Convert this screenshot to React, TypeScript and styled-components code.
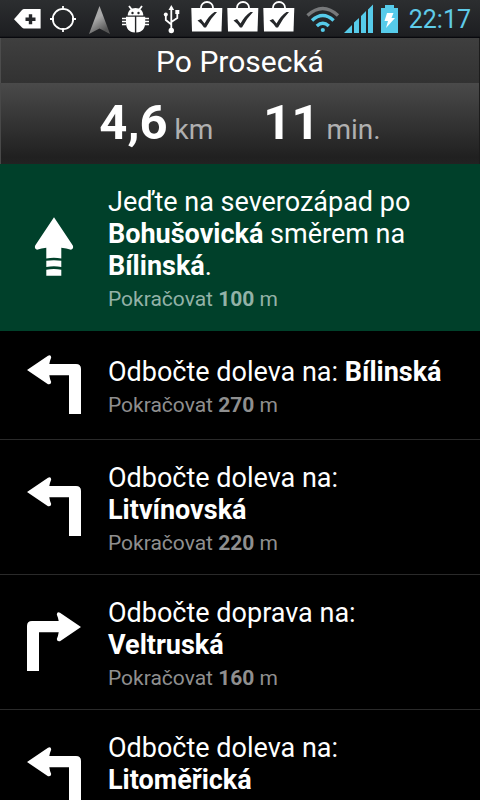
import React from "react";
import styled, { createGlobalStyle } from "styled-components";

const Global = createGlobalStyle`
  body {
    margin: 0;
    background: #000;
    color: #fff;
    font-family: Roboto, "Noto Sans", sans-serif;
    overflow: hidden;
  }
  * { box-sizing: border-box; }
`;

const Screen = styled.div`
  display: flex;
  flex-direction: column;
  height: 100vh;
  overflow: hidden;
`;

const StatusBar = styled.header`
  display: flex;
  flex: none;
  align-items: center;
  justify-content: space-between;
  height: 38px;
  padding: 0 9px 0 12px;
  background: linear-gradient(#2c2e30, #1d1e21 95%, #08080d 98%);
`;

const Notices = styled.div`
  display: flex;
  flex: none;
  svg { display: block; }
`;

const System = styled.div`
  display: flex;
  flex: none;
  align-items: center;
  svg { display: block; flex: none; }
`;

const Clock = styled.time`
  margin-left: 10px;
  padding-top: 2px;
  color: #5fcbe8;
  font-size: 25px;
  line-height: 36px;
`;

const Title = styled.h1`
  flex: none;
  margin: 0;
  padding-top: 2px;
  border-left: 1px solid #4c4c4c;
  border-right: 1px solid #1c1c1c;
  background: linear-gradient(#3f3f3f, #323232);
  font-size: 30px;
  font-weight: 400;
  line-height: 43px;
  text-align: center;
`;

const Summary = styled.section`
  display: flex;
  flex: none;
  justify-content: center;
  gap: 50px;
  height: 81px;
  border-left: 1px solid #484848;
  border-right: 1px solid #1c1c1c;
  background: linear-gradient(#4a4a4a, #202020 92%, #222);
`;

const Figure = styled.p`
  margin: 0;
  color: #b0b0b0;
  font-size: 28px;
  line-height: 80px;
  white-space: nowrap;
`;

const Amount = styled.strong`
  color: #fff;
  font-size: 49px;
  font-weight: 700;
`;

const Steps = styled.ol`
  margin: 0;
  padding: 0;
  list-style: none;
`;

const Step = styled.li<{ $current?: boolean }>`
  display: flex;
  align-items: center;
  padding: 22px 16px 22px 22px;
  border-bottom: 1px solid ${(p) => (p.$current ? "#00402a" : "#2a2a2a")};
  background: ${(p) => (p.$current ? "#00402a" : "#000")};
  color: ${(p) => (p.$current ? "#93b2a7" : "#8f8f8f")};
`;

const StepIcon = styled.svg`
  flex: none;
  width: 64px;
  height: 64px;
  margin-right: 22px;
  fill: #fff;
`;

const Instruction = styled.p`
  margin: 0;
  color: #fff;
  font-size: 27px;
  line-height: 32px;
`;

const Distance = styled.p`
  min-height: 26px;
  margin: 0;
  padding-top: 8px;
  font-size: 21px;
  line-height: 18px;
`;

type Turn = "straight" | "left" | "right";

const TurnShape = ({ turn }: { turn: Turn }) => {
  if (turn === "straight") {
    return (
      <path d="M32 2.3L50.8 30.5Q52 34 49 34.7Q44.5 33.2 39.3 32.8V43.4Q32 42.2 24.3 43.4V32.8Q19.5 33.2 15 34.7Q12 34 13.2 30.5ZM24.3 45.8Q32 44.5 39.3 45.8V51.9Q32 50.6 24.3 51.9ZM24.3 54.7Q32 53.5 39.3 54.7V60.7H24.3Z" />
    );
  }
  return (
    <path
      transform={turn === "right" ? "matrix(-1 0 0 1 64 0)" : undefined}
      d="M5 17L26 2.7Q29 1.5 29.2 4.5Q27.8 8 27.3 11H54Q59 11 59 16V61H47V22.3H27.3Q27.8 26 29.2 29Q29 32 26 31.2Z"
    />
  );
};

const ShoppingBag = ({ x }: { x: number }) => (
  <g transform={`translate(${x} 0)`}>
    <path d="M10 9V7.5a6 5.5 0 0 1 12 0V9" fill="none" stroke="#fff" strokeWidth="1.8" />
    <path d="M0.3 8h31l-.8 23.5H1Z" fill="#fff" />
    <path d="M6.500 20.500l3.500-1.500 3.500 4.500Q18 15.500 23.500 12h2.500Q19.500 18.500 15 27.500H13Q10.500 23.500 6.500 20.500Z" fill="#25272a" />
  </g>
);

const NoticeIcons = () => (
  <svg width="288" height="38" viewBox="12 0 288 38" aria-hidden="true">
    <defs>
      <linearGradient id="navFill" x1="0" y1="0" x2="0.5" y2="1">
        <stop offset="0" stopColor="#aaa" />
        <stop offset="0.5" stopColor="#aaa" />
        <stop offset="1" stopColor="#555" />
      </linearGradient>
    </defs>
    <path d="M14 19.2L22 10q1-1 2-1h16.6v19.6H24q-1 0-2-1Z" fill="#fff" />
    <path d="M25.5 19.3h10M30.5 14.3v10" stroke="#25272a" strokeWidth="3.4" />
    <g fill="none" stroke="#fff" strokeWidth="1.8">
      <circle cx="63" cy="19" r="10.2" />
      <path d="M63 6v4M63 28v4M50 19h4M72 19h4" />
    </g>
    <path d="M99.5 6L110 34l-10.5-5.5L89 34Z" fill="url(#navFill)" />
    <g fill="#fff">
      <path d="M127.7 15.5c0-4.5 3-7.5 7.8-7.5s7.8 3 7.8 7.5Z" />
      <path d="M129 6l3 4M142 6l-3 4" stroke="#fff" strokeWidth="1.8" />
      <path d="M126 16.8h8.900V32.500C129 32.500 126 28 126 23ZM136.300 16.800h8.900V23c0 5-3 9.500-8.900 9.500Z" />
      <path d="M122 18.500h4M122 21.500h4M122 24.500h4M145 18.500h4M145 21.500h4M145 24.500h4" stroke="#fff" strokeWidth="1.6" />
    </g>
    <g fill="#25272a">
      <circle cx="132.5" cy="13" r="1.2" />
      <circle cx="138.5" cy="13" r="1.2" />
    </g>
    <path
      d="M171.3 7v23M171.3 24.5l-5.5-4.5v-5M171.3 22l6-4v-6"
      fill="none"
      stroke="#fff"
      strokeWidth="1.8"
    />
    <g fill="#fff">
      <path d="M171.3 5l2.8 5h-5.6Z" />
      <circle cx="171.3" cy="30.5" r="2.7" />
      <circle cx="165.8" cy="14.5" r="2" />
      <path d="M175.3 10h4v4h-4Z" />
    </g>
    <ShoppingBag x={191} />
    <ShoppingBag x={227} />
    <ShoppingBag x={263} />
  </svg>
);

const SystemIcons = () => (
  <svg width="94" height="38" viewBox="306 0 94 38" aria-hidden="true">
    <g fill="none" strokeWidth="3.4">
      <path d="M308.5 15.5Q323.8 1.5 339 15.5" stroke="#77797b" />
      <g stroke="#56cbea">
        <path d="M313 20.5Q323.8 10.5 334.6 20.5" />
        <path d="M317.8 26Q323.8 20.5 329.8 26" />
      </g>
    </g>
    <g fill="#56cbea">
      <circle cx="323.8" cy="30" r="2.1" />
      <path d="M345 33l8-8V33ZM355 22.5l5-4.5v15h-5ZM362 16l5-5v22h-5ZM369 9.5l5-5V33h-5Z" />
      <path d="M386 5h9v3h4v25h-17V8h4Z" />
    </g>
    <path d="M388 13h6.5l-2 5h3.500l-9 10 2-7h-3.500Z" fill="#fff" />
  </svg>
);

interface StepData {
  turn: Turn;
  text: React.ReactNode;
  meters?: string;
}

const steps: StepData[] = [
  {
    turn: "straight",
    text: <>Jeďte na severozápad po <b>Bohušovická</b> směrem na <b>Bílinská</b>.</>,
    meters: "100",
  },
  { turn: "left", text: <>Odbočte doleva na: <b>Bílinská</b></>, meters: "270" },
  { turn: "left", text: <>Odbočte doleva na: <b>Litvínovská</b></>, meters: "220" },
  { turn: "right", text: <>Odbočte doprava na: <b>Veltruská</b></>, meters: "160" },
  { turn: "left", text: <>Odbočte doleva na: <b>Litoměřická</b></> },
];

export default function App() {
  return (
    <>
      <Global />
      <Screen>
        <StatusBar>
          <Notices><NoticeIcons /></Notices>
          <System>
            <SystemIcons />
            <Clock>22:17</Clock>
          </System>
        </StatusBar>
        <Title>Po Prosecká</Title>
        <Summary>
          <Figure><Amount>4,6</Amount> km</Figure>
          <Figure><Amount>11</Amount> min.</Figure>
        </Summary>
        <Steps>
          {steps.map((step, i) => (
            <Step key={i} $current={i === 0}>
              <StepIcon viewBox="0 0 64 64" aria-hidden="true">
                <TurnShape turn={step.turn} />
              </StepIcon>
              <div>
                <Instruction>{step.text}</Instruction>
                <Distance>
                  {step.meters && <>Pokračovat <b>{step.meters}</b> m</>}
                </Distance>
              </div>
            </Step>
          ))}
        </Steps>
      </Screen>
    </>
  );
}
